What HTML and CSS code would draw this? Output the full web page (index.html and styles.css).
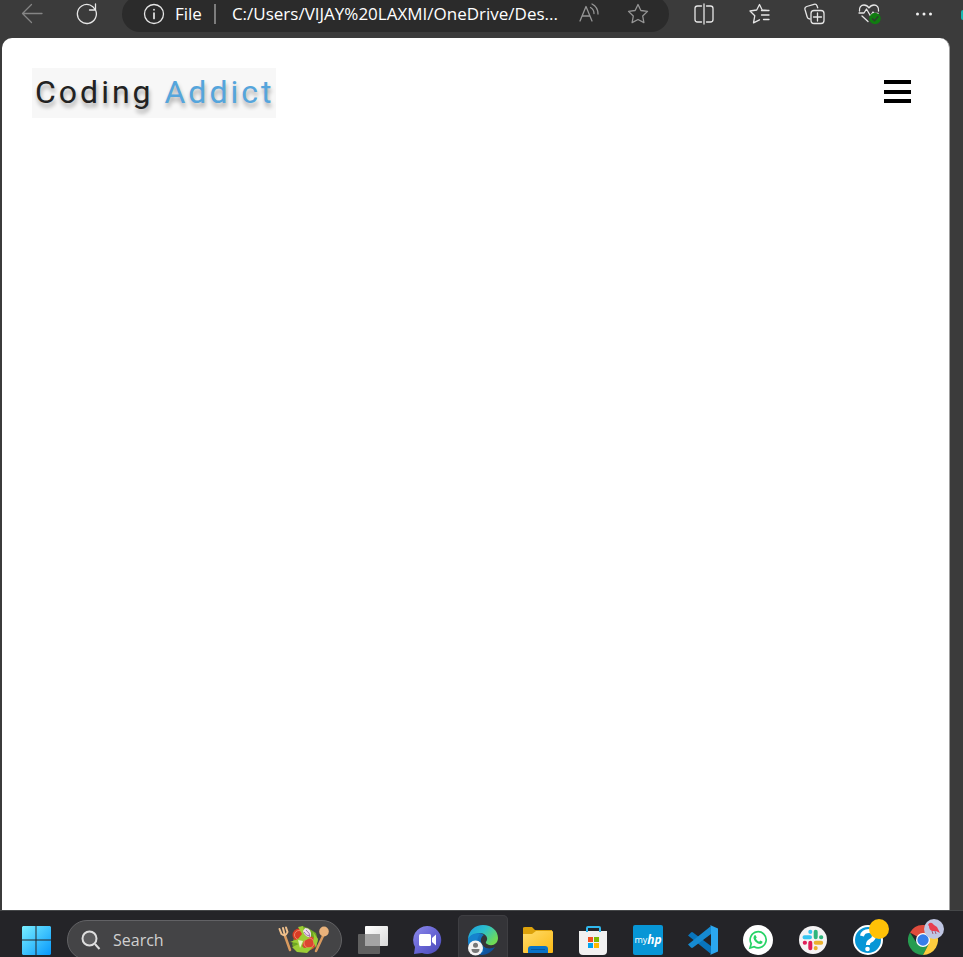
FILE: index.html
```html
<!DOCTYPE html>
<html lang="en">
<head>
<meta charset="utf-8">
<meta name="viewport" content="width=device-width, initial-scale=1">
<title>Coding Addict</title>
<link rel="stylesheet" href="styles.css">
</head>
<body>
<header class="toolbar">
  <button class="tool dim" aria-label="Back"><svg width="22" height="22" viewBox="0 0 22 22"><path d="M21 10.500H1.500M10.500 1.500l-9 9 9 9"/></svg></button>
  <button class="tool" aria-label="Refresh"><svg width="22" height="22" viewBox="0 0 22 22"><path d="M19.500 7A9.500 9.500 0 1 1 14 2q3 1 5.500 5M19.500 1v6h-6"/></svg></button>
  <div class="address">
    <svg class="info" width="22" height="22" viewBox="0 0 22 22"><circle cx="11" cy="11" r="9.500"/><path class="bold" d="M11 10v5.500M11 6.500v.3"/></svg>
    <label class="scheme" for="url">File</label>
    <span class="rule"></span>
    <input class="url" id="url" type="text" value="C:/Users/VIJAY%20LAXMI/OneDrive/Des..." readonly>
    <button class="addr-btn" aria-label="Read aloud"><svg width="22" height="22" viewBox="0 0 22 22"><path d="M2 18 8 3.500 14 18M4.200 13h7.600M12.500 4.500q3.500 2 3.500 6M14 1q6 3 6 10"/></svg></button>
    <button class="addr-btn" aria-label="Add to favorites"><svg width="22" height="22" viewBox="0 0 22 22"><path d="m11 1.500 2.900 6 6.600.9-4.800 4.600 1.200 6.600L11 16.500l-5.900 3.100L6.300 13 1.500 8.400l6.600-.9z"/></svg></button>
  </div>
  <button class="tool" aria-label="Split screen"><svg width="22" height="22" viewBox="0 0 22 22"><path d="M11 1v20M8.500 3H4.500a2.500 2.500 0 0 0-2.500 2.500v11A2.500 2.500 0 0 0 4.500 19h4M13.500 3h4A2.500 2.500 0 0 1 20 5.500v11a2.500 2.500 0 0 1-2.500 2.500h-4"/></svg></button>
  <button class="tool" aria-label="Favorites"><svg width="22" height="22" viewBox="-1 0 22 22"><path d="M18.500 7.500 13.200 7 10.500 1.500 7.700 7 1 8l4.800 4.700L4.500 19.800l6-3M12.500 7.500H20M12.500 12H20M14.500 16.500H20"/></svg></button>
  <button class="tool" aria-label="Collections"><svg width="22" height="22" viewBox="-1 0 22 22"><path d="M6 16c-1.500 0-2.500-.8-2.800-2L1 6.500C.6 5 1.300 4 2.700 3.500L10 1.300c1.300-.4 2.500.2 3 1.500l.7 2"/><rect x="7" y="7.500" width="13" height="13" rx="3"/><path d="M13.500 10v8M9.500 14h8"/></svg></button>
  <button class="tool" aria-label="Browser essentials"><svg width="24" height="22" viewBox="-1 0 24 22"><path d="M1.500 8C1 4.500 3 2 6 2c2.500 0 4 1.500 5 3 1-1.500 2.500-3 5-3 3 0 5 2.500 4.500 6M1 10h5l2.500-4 4 7 2.500-4 1 1.500h4M4 13l6 5.500"/><circle class="status" cx="17" cy="15.500" r="5.700"/><path class="tick" d="m14.500 15.700 2 2 3.500-4"/></svg></button>
  <button class="tool" aria-label="Settings and more"><svg width="22" height="22" viewBox="0 0 22 22"><g class="dots"><circle cx="4.500" cy="11" r="1.500"/><circle cx="11" cy="11" r="1.500"/><circle cx="17.500" cy="11" r="1.500"/></g></svg></button>
  <span class="edge-mark"></span>
</header>

<main class="page">
  <nav class="nav">
    <a class="logo" href="#">Coding <span>Addict</span></a>
    <button class="menu" aria-label="Toggle menu"><svg width="28" height="24" viewBox="0 0 28 24"><path d="M0 0h27v4H0zM0 10h27v4H0zM0 19h27v4H0z"/></svg></button>
  </nav>
</main>

<footer class="taskbar">
  <button class="app" aria-label="Start"><svg width="30" height="30" viewBox="0 0 30 30"><defs><linearGradient id="win" x1="0" y1="0" x2="30" y2="30" gradientUnits="userSpaceOnUse"><stop stop-color="#7df1ff"/><stop offset="1" stop-color="#0698fb"/></linearGradient></defs><path fill="url(#win)" d="M2 1h12.500v13.500H1V2zM15.500 1H29l1 1v12.500H15.500zM1 15.500h13.500V30H2l-1-1zM15.500 15.500H30V29l-1 1H15.500z"/></svg></button>
  <div class="search">
    <svg width="22" height="22" viewBox="1 0 22 22"><circle cx="9.500" cy="9.500" r="7"/><path d="m15 15 4.500 5"/></svg>
    <input type="text" placeholder="Search" aria-label="Search">
    <svg class="salad" width="52" height="30" viewBox="0 0 52 30">
      <g fill="none" stroke="#d99a5e" stroke-linecap="round"><path stroke-width="2.500" d="m7 11 5 14M45 11l-7 15"/><path stroke-width="2" stroke="#efc08c" d="m1.500 4 2 5q4 3 6-2L8 2.500M5 3l1.500 6"/></g>
      <ellipse cx="46" cy="6.500" rx="4.800" ry="5" fill="#e9b27b"/>
      <path fill="#6ea724" d="m14 20 3-11 7-8 6 2 8 5 2 8-4 7-8 4-9-2z"/>
      <circle cx="21" cy="10" r="6.500" fill="#d93c25"/><circle cx="31" cy="18" r="7" fill="#dc4630"/>
      <circle cx="21" cy="10" r="4.500" fill="none" stroke="#f38667"/><circle cx="31" cy="18" r="5" fill="none" stroke="#f38667"/>
      <path fill="#9dce35" d="m20 2 5-1 2 9 5 3-6 3-3 7-4-5-7-1 8-3 4-5zM35 7l5 7-2 9-3-7 1-4zM14 22l7-3 5 4 9-1-6 6-10-1z"/>
      <path fill="#eeddeb" d="M27 3q7 0 6 9-6 1-8-6z"/><path fill="none" stroke="#a277b0" d="M28 5q4 3 4 7M26 7q2 4 6 4"/>
      <path fill="#e7f5c1" d="m20 15 5 1-3 7-1-4z"/>
    </svg>
  </div>
  <button class="app" aria-label="Task view"><svg width="30" height="30" viewBox="0 0 30 30"><defs><linearGradient id="tv" x2="1" y2="1"><stop stop-color="#fff"/><stop offset="1" stop-color="#d8d8d8"/></linearGradient></defs><rect x="7" y="1" width="23" height="20" rx="1" fill="url(#tv)"/><rect y="9" width="22" height="20" rx="1" fill="#606060"/><path fill="#a4a4a4" d="M7 9h15v12H7z"/></svg></button>
  <button class="app" aria-label="Chat"><svg width="30" height="30" viewBox="1 0 30 30"><defs><linearGradient id="chat" x2="1" y2="1"><stop stop-color="#8d8bea"/><stop offset=".5" stop-color="#6865d5"/><stop offset="1" stop-color="#4849b5"/></linearGradient></defs><path fill="url(#chat)" d="M15 1a14 14 0 1 1-5 27l-8 1 1-7A14 14 0 0 1 15 1z"/><rect x="7" y="9" width="12" height="12" rx="1.500" fill="#fff"/><path fill="#fff" d="m20 13 4-3.500v11L20 17z"/></svg></button>
  <button class="app active" aria-label="Microsoft Edge"><svg width="32" height="32" viewBox="0 0 32 32"><defs><linearGradient id="ed1" x2="1" y2=".6"><stop stop-color="#1d9de0"/><stop offset=".5" stop-color="#2bbfcd"/><stop offset="1" stop-color="#70db55"/></linearGradient><linearGradient id="ed2" x2="1" y2="1"><stop stop-color="#1689d4"/><stop offset="1" stop-color="#0d4590"/></linearGradient></defs>
    <path fill="url(#ed2)" d="M1 15C2 8 12 7 17 11c-5 3-4 10 2 13 4 1 7 0 9-1-5 8-14 10-20 6-5-3-7-8-7-14z"/>
    <path fill="url(#ed1)" d="M1 15C2 6 8 1 16 1c9 0 15 6 15 13 0 6-6 9-11 6-2-1-1-2 0-4 1-3-2-7-7-7-6 0-10 2-12 6z"/>
    <path fill="#1683ce" d="M1 17C2 11 8 9 13 10c-4 4-4 13 4 18-9 2-16-4-16-11z"/>
    <circle cx="8.500" cy="24" r="7.500" fill="#f3f3f3"/><circle cx="8.500" cy="21.300" r="2.500" fill="#777"/><path fill="#777" d="M4.500 25h8q0 4-4 4t-4-4z"/></svg></button>
  <button class="app" aria-label="File Explorer"><svg width="30" height="28" viewBox="0 0 30 28"><defs><linearGradient id="fold" x2="1" y2="1"><stop stop-color="#ffdc6b"/><stop offset="1" stop-color="#fbb913"/></linearGradient></defs><path fill="#dda20b" d="M0 2Q0 1 2 1h7l3 3h17v8H0z"/><path fill="url(#fold)" d="M0 8h9l4-3h16q1 0 1 1v20q0 1-1 1H1q-1 0-1-1z"/><path fill="#0873c8" d="M5 27v-4q0-3 3-3h14q3 0 3 3v4z"/><path fill="#07579d" d="M8 23h14v1H8z"/></svg></button>
  <button class="app" aria-label="Microsoft Store"><svg width="30" height="30" viewBox="0 0 30 30"><path fill="#f1f1f1" d="M1 6h28v20q0 4-4 4H5q-4 0-4-4z"/><path fill="none" stroke="#30b8ee" stroke-width="2" d="M9 7V3q0-1 1-1h11q1 0 1 1v4"/><path fill="#f25022" d="M10 12h5v5h-5z"/><path fill="#7fba00" d="M16 12h5v5h-5z"/><path fill="#00a4ef" d="M10 18h5v5h-5z"/><path fill="#ffb900" d="M16 18h5v5h-5z"/></svg></button>
  <button class="app" aria-label="myHP"><span class="myhp">my<b>hp</b></span></button>
  <button class="app" aria-label="Visual Studio Code"><svg width="30" height="30" viewBox="0 0 30 30"><path fill="#0875bd" d="M0 10.500 3 7.500q1-.8 2 0L23 21v8z"/><path fill="#168bd2" d="m0 19.500 3 3q1 .8 2 0L23 9V1z"/><path fill="#2ba7ef" d="m22 0 8 3.500v23L22 30q1-1 1-2V2q0-1-1-2z"/></svg></button>
  <button class="app" aria-label="WhatsApp"><svg width="30" height="30" viewBox="0 0 30 30"><circle cx="15" cy="15" r="15" fill="#fff"/><path fill="none" stroke="#27d366" stroke-width="1.700" d="m7 23 1.200-4.300a8 8 0 1 1 3 3z"/><path fill="#27d366" d="M11.300 10.500q1-1 1.600.2l.8 1.800-.8 1.200q1 2 3.200 3l1.200-1.300 2.200 1q.5 2-2 2.700-2.500.2-5-2.300-3.300-3.500-1.200-6.300z"/></svg></button>
  <button class="app" aria-label="Slack"><svg width="30" height="30" viewBox="0 0 30 30"><circle cx="15" cy="15" r="14" fill="#f5f3f4"/><g fill="none" stroke-width="4" stroke-linecap="round"><path stroke="#36c5f0" d="M6.500 12.300h5.500M12.300 6.800v.3"/><path stroke="#2eb67d" d="M17.700 6.800v5.500M23 12.300h.3"/><path stroke="#ecb22e" d="M17.700 17.700h5.500M17.700 23v.3"/><path stroke="#e01e5a" d="M12.300 17.700v5.500M6.700 17.700h.3"/></g></svg></button>
  <button class="app" aria-label="HP Support, 1 notification"><svg width="30" height="30" viewBox="0 0 30 30"><circle cx="15" cy="15" r="14" fill="#0796d6" stroke="#fff" stroke-width="2"/><path fill="none" stroke="#fff" stroke-width="4" d="M9 11q1-5 7-5 5 0 5 5 0 3-4 5-2 1-2 4"/><circle cx="14.500" cy="24" r="2.300" fill="#fff"/></svg><span class="badge"></span></button>
  <button class="app" aria-label="Google Chrome"><svg width="30" height="30" viewBox="0 0 30 30"><path fill="#df4b3d" d="M15 15 2 7.500a15 15 0 0 1 26 0z"/><path fill="#269c50" d="M21 18.500 15 30A15 15 0 0 1 2 7.500l7 11z"/><path fill="#fdcd3e" d="M15 8h13.300A15 15 0 0 1 15 30l6-11.500z"/><circle cx="15" cy="15" r="7" fill="#fff"/><circle cx="15" cy="15" r="5.700" fill="#367ee9"/></svg><span class="badge profile"><svg width="20" height="20" viewBox="0 0 20 20"><path fill="#e83e50" d="M4 6q1-3 4-2l2 2 3 2 3 6-4-2H8q-3-1-3-5z"/><path fill="none" stroke="#a65a78" d="m8 12 1 3M11 12l1 3"/></svg></span></button>
</footer>
</body>
</html>
```
FILE: styles.css
```css
* { box-sizing: border-box; }

body {
  margin: 0;
  height: 100vh;
  display: flex;
  flex-direction: column;
  overflow: hidden;
  background: #3b3b3b;
  font-family: "Open Sans", "Noto Sans", sans-serif;
}

button {
  padding: 0;
  border: 0;
  background: none;
  color: inherit;
  font: inherit;
}

input {
  min-width: 0;
  padding: 0;
  border: 0;
  outline: 0;
  background: none;
  font: inherit;
}

svg { display: block; flex: none; }

/* Browser toolbar */
.toolbar {
  position: relative;
  flex: none;
  display: flex;
  align-items: flex-start;
  gap: 15px;
  height: 38px;
  padding: 0 19px 0 12px;
  color: #fff;
}

.toolbar svg {
  fill: none;
  stroke: #e6e6e6;
  stroke-width: 1.3;
  stroke-linecap: round;
  stroke-linejoin: round;
}

.toolbar .bold { stroke-width: 1.7; }
.toolbar .dots { fill: #f0f0f0; stroke: none; }
.toolbar .status { fill: #107c10; stroke: none; }
.toolbar .tick { stroke: #303b30; }
.toolbar .dim svg { stroke: #858585; }

.tool {
  flex: none;
  width: 40px;
  height: 28px;
  display: grid;
  place-items: center;
}

.address {
  flex: 1;
  min-width: 0;
  height: 36px;
  margin-top: -4px;
  padding: 0 20px;
  display: flex;
  align-items: center;
  border-radius: 18px;
  background: #2b2b2b;
  font-size: 17px;
  line-height: 24px;
}

.address .info { margin: 0 10px 0 1px; }

.rule {
  flex: none;
  width: 2px;
  height: 20px;
  margin: 0 16px 0 12px;
  background: #7d7d7d;
}

.url { flex: 1; color: #fff; }

.addr-btn { margin-left: 27px; }
.addr-btn:first-of-type { margin-left: 12px; }
.toolbar .addr-btn svg { stroke: #969696; }

.edge-mark {
  position: absolute;
  top: 10px;
  right: 0;
  width: 2px;
  height: 10px;
  border-radius: 2px 0 0 2px;
  background: #19b8b0;
}

/* Web page */
.page {
  flex: 1;
  margin: 0 13px 0 2px;
  border-right: 1px solid #a0a0a0;
  border-radius: 10px 10px 0 0;
  background: #fff;
}

.nav {
  display: flex;
  justify-content: space-between;
  align-items: center;
  padding: 30px 37px 0 30px;
}

.logo {
  padding: 0 2px 2px 3px;
  background: #f7f7f7;
  color: #222;
  font-family: Roboto, sans-serif;
  font-size: 32px;
  line-height: 48px;
  letter-spacing: 3px;
  text-decoration: none;
  text-shadow: 1px 4px 4px #00000055;
}

.logo span { color: #55a5dc; }
.menu { padding-bottom: 2px; }
.menu svg { fill: #000; }

/* Taskbar */
.taskbar {
  flex: none;
  display: flex;
  align-items: flex-start;
  gap: 5px;
  height: 47px;
  padding: 4px 15px 0 11px;
  overflow: hidden;
  border-top: 1px solid #454749;
  background: #242428;
}

.app {
  position: relative;
  flex: none;
  width: 50px;
  height: 50px;
  display: grid;
  place-items: center;
  border-radius: 5px;
}

.app.active {
  background: #343438;
  box-shadow: inset 0 0 0 1px #3e3e42;
}

.search {
  flex: 1;
  min-width: 0;
  height: 40px;
  margin: 5px 1px 0;
  padding: 0 11px 0 13px;
  display: flex;
  align-items: center;
  gap: 10px;
  border: 1px solid #626265;
  border-radius: 20px;
  background: #444446;
  color: #d0d0d0;
  font-size: 16px;
}

.search > svg:first-child {
  fill: #5c5c5e;
  stroke: #dedede;
  stroke-width: 2;
}

.search input { flex: 1; color: inherit; }
.search input::placeholder { color: inherit; opacity: 1; }

.myhp {
  display: flex;
  align-items: center;
  justify-content: center;
  width: 30px;
  height: 30px;
  border-radius: 2px;
  background: #0796d6;
  color: #fff;
  font-size: 9px;
  line-height: 16px;
}

.myhp b { font-size: 12px; font-style: italic; }

.badge {
  position: absolute;
  top: 4px;
  right: 4px;
  width: 20px;
  height: 20px;
  border-radius: 50%;
  background: #ffc107;
}

.badge.profile { background: #bfc6e3; }
```
